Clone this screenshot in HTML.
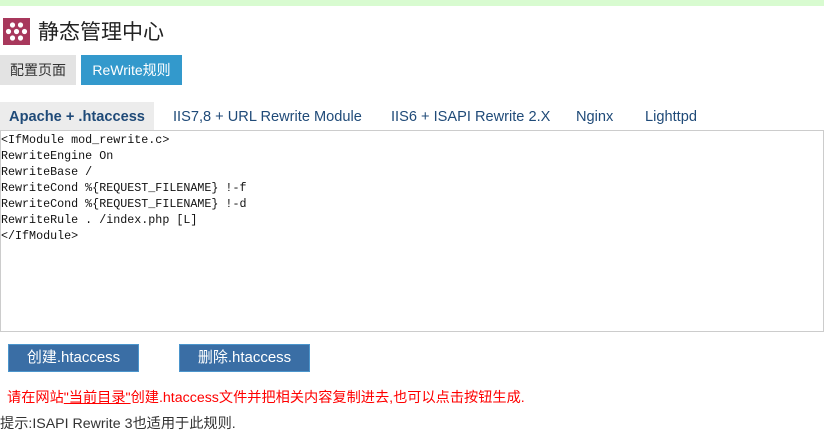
<!DOCTYPE html>
<html><head><meta charset="utf-8"><style>
*{margin:0;padding:0;box-sizing:border-box}
body{width:824px;height:446px;background:#fff;font-family:"Liberation Sans","Noto Sans CJK SC",sans-serif;position:relative;overflow:hidden}
.a{position:absolute}
.topbar{left:0;top:0;width:824px;height:6px;background:#d8fbd0}
.logo{left:3px;top:18px;width:27px;height:27px;background:#a8385c}
.title{left:38px;top:19px;font-size:21px;color:#222;line-height:28px}
.b1{left:0;top:55px;width:76px;height:30px;background:#e3e3e3;color:#333;font-size:14px;line-height:30px;text-align:center}
.b2{left:81px;top:55px;width:101px;height:30px;background:#3399cc;color:#fff;font-size:14px;line-height:30px;text-align:center}
.tab{top:102px;height:28px;line-height:30px;font-size:14.6px;color:#1f4a78}
.t0{left:0;width:154px;background:#ececec;font-weight:bold;text-align:center}
.ta{left:0;top:130px;width:824px;height:202px;border:1px solid #ccc;font-family:"Liberation Mono",monospace;font-size:11.7px;line-height:16px;color:#111;white-space:pre;padding:1px 0 0 0}
.btn{top:344px;width:131px;height:28px;background:#3a6ea5;border:1px solid #4b95cc;color:#fff;font-size:15px;line-height:26px;text-align:center}
.red{left:7px;top:389px;font-size:14.2px;color:#f00;line-height:18px}
.red u{color:#f00}
.tip{left:0;top:415px;font-size:14.2px;color:#333;line-height:18px}
</style></head><body>
<div class="a topbar"></div>
<div class="a logo"><svg width="27" height="27" viewBox="0 0 27 27"><g fill="#fff"><circle cx="9.5" cy="7" r="2.6"/><circle cx="17.5" cy="7" r="2.6"/><circle cx="5.5" cy="13.5" r="2.6"/><circle cx="13.5" cy="13.5" r="2.6"/><circle cx="21.5" cy="13.5" r="2.6"/><circle cx="9.5" cy="20" r="2.6"/><circle cx="17.5" cy="20" r="2.6"/></g></svg></div>
<div class="a title">静态管理中心</div>
<div class="a b1">配置页面</div>
<div class="a b2">ReWrite规则</div>
<div class="a tab t0">Apache + .htaccess</div>
<div class="a tab" style="left:173px">IIS7,8 + URL Rewrite Module</div>
<div class="a tab" style="left:391px">IIS6 + ISAPI Rewrite 2.X</div>
<div class="a tab" style="left:576px">Nginx</div>
<div class="a tab" style="left:645px">Lighttpd</div>
<div class="a ta">&lt;IfModule mod_rewrite.c&gt;
RewriteEngine On
RewriteBase /
RewriteCond %{REQUEST_FILENAME} !-f
RewriteCond %{REQUEST_FILENAME} !-d
RewriteRule . /index.php [L]
&lt;/IfModule&gt;</div>
<div class="a btn" style="left:8px">创建.htaccess</div>
<div class="a btn" style="left:179px">删除.htaccess</div>
<div class="a red">请在网站<u>"当前目录"</u>创建.htaccess文件并把相关内容复制进去,也可以点击按钮生成.</div>
<div class="a tip">提示:ISAPI Rewrite 3也适用于此规则.</div>
</body></html>
